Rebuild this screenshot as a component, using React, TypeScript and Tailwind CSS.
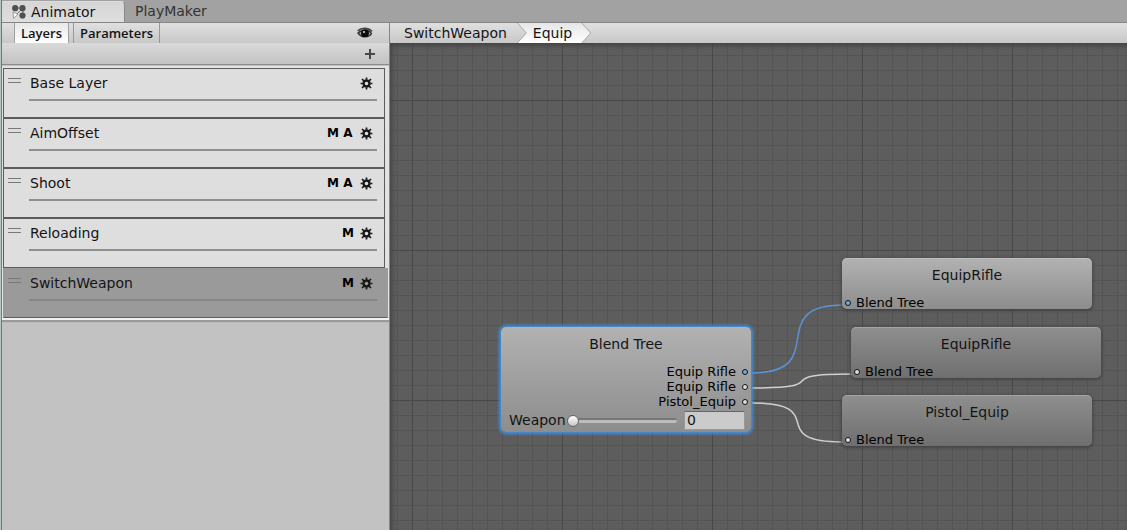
import React, { useState } from 'react';

interface Layer {
  name: string;
  mask: boolean;
  additive: boolean;
}

interface MotionNode {
  id: string;
  title: string;
  place: string;
  fill: string;
  active: boolean;
}

interface Wire {
  from: [number, number];
  to: [number, number];
  color: string;
}

const LAYERS: Layer[] = [
  { name: 'Base Layer', mask: false, additive: false },
  { name: 'AimOffset', mask: true, additive: true },
  { name: 'Shoot', mask: true, additive: true },
  { name: 'Reloading', mask: true, additive: false },
  { name: 'SwitchWeapon', mask: true, additive: false },
];

const OUTPUTS = [
  { name: 'Equip Rifle', active: true },
  { name: 'Equip Rifle', active: false },
  { name: 'Pistol_Equip', active: false },
];

const NODES: MotionNode[] = [
  { id: 'rifle-a', title: 'EquipRifle', place: 'left-[452px] top-[215px]', fill: 'from-[#b2b2b2] to-[#8d8d8d]', active: true },
  { id: 'rifle-b', title: 'EquipRifle', place: 'left-[461px] top-[284px]', fill: 'from-[#8f8f8f] to-[#6f6f6f]', active: false },
  { id: 'pistol', title: 'Pistol_Equip', place: 'left-[452px] top-[352px]', fill: 'from-[#8f8f8f] to-[#6f6f6f]', active: false },
];

const WIRES: Wire[] = [
  { from: [362, 330], to: [453, 262], color: '#5b93d4' },
  { from: [362, 345], to: [462, 331], color: '#cfcfcf' },
  { from: [362, 360], to: [453, 399], color: '#cfcfcf' },
];

const TAB_TEXT = "font-['Open_Sans',sans-serif] text-[13px] font-semibold";

// S-curve that runs close to vertical halfway between its two ports
function wirePath({ from, to }: Wire): string {
  const reach = (to[0] - from[0]) * 0.88;
  return `M${from[0]} ${from[1]} C${from[0] + reach} ${from[1]} ${to[0] - reach} ${to[1]} ${to[0]} ${to[1]}`;
}

// ─── icons ───────────────────────────────────────────────────────────────────

const AnimatorIcon: React.FC = () => (
  <svg width="16" height="16" viewBox="0 0 16 16" aria-hidden="true">
    <path d="M4 4h8v8M12 4L4 12" stroke="#777" strokeWidth="1" fill="none" />
    <circle cx="4.2" cy="4.2" r="3.1" fill="#505050" />
    <circle cx="11.5" cy="4.2" r="3.1" fill="#505050" />
    <circle cx="11.5" cy="11.5" r="3.1" fill="#505050" />
    <path d="M2 8L7 10.200L2.500 14.500Z" fill="#f8f8f8" stroke="#888" strokeWidth="0.8" />
  </svg>
);

const EyeIcon: React.FC = () => (
  <svg width="16" height="12" viewBox="0 0 16 12" aria-hidden="true">
    <path d="M1 6C3.500 3 12 2 14.500 6.500C12 11 4.500 11.200 1 6Z" fill="#aaa" stroke="#333" strokeWidth="1.400" />
    <path d="M0.800 3.800C4 0.600 11 0.200 15 4.400" fill="none" stroke="#444" strokeWidth="1.800" />
    <circle cx="8" cy="6.200" r="3.900" fill="#0a0a0a" />
    <circle cx="7" cy="5" r="0.900" fill="#fff" />
  </svg>
);

const GearIcon: React.FC = () => (
  <svg width="13" height="13" viewBox="0 0 13 13" fill="none" stroke="#181818" aria-hidden="true">
    <circle cx="6.500" cy="6.500" r="3" strokeWidth="2.400" />
    <path
      d="M6.500 0.600v2M6.500 10.400v2M0.600 6.500h2M10.400 6.500h2M2 2l2 2M9 9l2 2M2 11l2-2M9 4l2-2"
      strokeWidth="1.700"
    />
  </svg>
);

// ─── layers panel ────────────────────────────────────────────────────────────

const LayerRow: React.FC<{ layer: Layer; selected: boolean; onSelect: () => void }> = ({
  layer, selected, onSelect,
}) => (
  <li
    onClick={onSelect}
    className={`flex h-[50px] border pl-1 pr-[7px] ${
      selected
        ? 'mr-px border-[#9a9a9a] border-b-[#5c5c5c] bg-[#9a9a9a]'
        : 'mr-1 border-[#5c5c5c] bg-[#dedede]'
    }`}
  >
    <span className="mt-[9px] h-[5px] w-[13px] shrink-0 border-y border-[#787878]" />
    <div className={`ml-2 flex-1 ${selected ? 'mr-[3px]' : ''}`}>
      <div className="mt-1 flex h-5 items-center">
        <button type="button" className="flex-1 pl-px text-left">{layer.name}</button>
        <span className="flex items-center gap-[3px] text-xs font-bold text-black">
          {layer.mask && <span className="w-3 text-center">M</span>}
          {layer.additive && <span className="w-3 text-center">A</span>}
        </span>
        <button type="button" aria-label={`${layer.name} settings`} className="mr-1 ml-[6px]">
          <GearIcon />
        </button>
      </div>
      <div className={`mt-[6px] h-[2px] ${selected ? 'bg-[#868686]' : 'bg-[#909090]'}`} />
    </div>
  </li>
);

const LayersPanel: React.FC = () => {
  const [selected, setSelected] = useState('SwitchWeapon');

  return (
    <aside className="flex w-[388px] shrink-0 flex-col border-r border-[#858585] bg-[#c2c2c2]">
      <div className="flex h-[21px] items-stretch border-t border-[#858585] bg-linear-to-b from-[#e0e0e0] to-[#c8c8c8]">
        <button type="button" className={`ml-3 border-x border-[#a0a0a0] bg-linear-to-b from-[#e8e8e8] to-white px-[6px] leading-5 ${TAB_TEXT}`}>
          Layers
        </button>
        <button type="button" className={`ml-1 border-x border-[#999] px-[6px] leading-5 ${TAB_TEXT}`}>
          Parameters
        </button>
        <button type="button" aria-label="Toggle panel" className="ml-auto mr-4">
          <EyeIcon />
        </button>
      </div>
      <div className="flex h-[22px] items-center justify-end border-b border-[#8c8c8c] bg-linear-to-b from-[#dadada] to-[#c2c2c2] pr-[14px]">
        <button type="button" aria-label="Add layer">
          <svg width="10" height="10" viewBox="0 0 10 10" aria-hidden="true">
            <path d="M5 0v10M0 5h10" stroke="#484848" strokeWidth="2" />
          </svg>
        </button>
      </div>
      <ul className="mt-px border-b-2 border-[#f0f0f0] bg-[#e2e2e2] pt-[2px] pl-px shadow-[0_2px_1px_#999]">
        {LAYERS.map((layer) => (
          <LayerRow
            key={layer.name}
            layer={layer}
            selected={layer.name === selected}
            onSelect={() => setSelected(layer.name)}
          />
        ))}
      </ul>
    </aside>
  );
};

// ─── graph ───────────────────────────────────────────────────────────────────

const Port: React.FC<{ active: boolean }> = ({ active }) => (
  <span
    className={`size-[6px] shrink-0 rounded-full border border-[#111] ${active ? 'bg-[#6fa8e8]' : 'bg-[#ddd]'}`}
  />
);

const Breadcrumbs: React.FC = () => (
  <nav className="flex h-[21px] items-stretch border-t border-[#858585] bg-linear-to-b from-[#e0e0e0] to-[#c8c8c8] leading-5">
    <button type="button" className="pr-[10px] pl-[14px]">SwitchWeapon</button>
    <span className="flex bg-[#a8a8a8] [clip-path:polygon(0_0,calc(100%-9px)_0,100%_50%,calc(100%-9px)_100%,0_100%,9px_50%)]">
      <button
        type="button"
        className="mx-px bg-linear-to-b from-[#e6e6e6] to-white pr-[18px] pl-[15px] [clip-path:polygon(0_0,calc(100%-9px)_0,100%_50%,calc(100%-9px)_100%,0_100%,9px_50%)]"
      >
        Equip
      </button>
    </span>
  </nav>
);

const BlendTreeNode: React.FC = () => {
  const [weapon, setWeapon] = useState('0');

  return (
    <section className="absolute top-[284px] left-[111px] h-[105px] w-[250px] rounded-[5px] bg-linear-to-b from-[#b2b2b2] to-[#8d8d8d] pt-[7px] shadow-[0_0_3px_2px_#3f8fdc]">
      <h2 className="text-center leading-5">Blend Tree</h2>
      <ul className="mt-[10px]">
        {OUTPUTS.map((output, i) => (
          <li key={i} className="flex h-[15px] items-center justify-end gap-[6px] pr-[3px] text-[13px] leading-[15px] text-black">
            {output.name}
            <Port active={output.active} />
          </li>
        ))}
      </ul>
      <div className="mt-px flex h-5 items-center pr-[6px] pl-2">
        <label htmlFor="weapon">Weapon</label>
        <input
          id="weapon"
          type="range"
          min="0"
          max="1"
          step="0.01"
          value={Number(weapon) || 0}
          onChange={(e) => setWeapon(e.target.value)}
          className="mr-[7px] ml-px h-3 min-w-0 flex-1 appearance-none bg-transparent [&::-webkit-slider-runnable-track]:h-[5px] [&::-webkit-slider-runnable-track]:rounded-sm [&::-webkit-slider-runnable-track]:border-t-2 [&::-webkit-slider-runnable-track]:border-[#777] [&::-webkit-slider-runnable-track]:bg-[#bcbcbc] [&::-webkit-slider-thumb]:-mt-[5px] [&::-webkit-slider-thumb]:size-3 [&::-webkit-slider-thumb]:appearance-none [&::-webkit-slider-thumb]:rounded-full [&::-webkit-slider-thumb]:border [&::-webkit-slider-thumb]:border-[#666] [&::-webkit-slider-thumb]:bg-linear-to-b [&::-webkit-slider-thumb]:from-white [&::-webkit-slider-thumb]:to-[#c4c4c4]"
        />
        <input
          type="text"
          aria-label="Weapon value"
          value={weapon}
          onChange={(e) => setWeapon(e.target.value)}
          className="h-[19px] w-[61px] border border-[#999] border-t-[#666] bg-[#cbcbcb] px-[2px]"
        />
      </div>
    </section>
  );
};

const Graph: React.FC = () => (
  <div className="relative flex-1 overflow-hidden bg-[#5d5d5d] bg-[linear-gradient(to_right,#484848_1px,transparent_1px),linear-gradient(to_bottom,#484848_1px,transparent_1px),linear-gradient(to_right,#545454_1px,transparent_1px),linear-gradient(to_bottom,#545454_1px,transparent_1px)] bg-size-[150px_150px,150px_150px,15px_15px,15px_15px] bg-position-[22px_57px,22px_57px,7px_12px,7px_12px] shadow-[inset_2px_3px_4px_#444]">
    <svg className="absolute inset-0 size-full" fill="none" aria-hidden="true">
      {WIRES.map((wire, i) => (
        <path key={i} d={wirePath(wire)} stroke={wire.color} strokeWidth="1.500" />
      ))}
    </svg>
    <BlendTreeNode />
    {NODES.map((node) => (
      <section
        key={node.id}
        className={`absolute h-[51px] w-[250px] rounded-[5px] bg-linear-to-b pt-[7px] shadow-[0_1px_3px_1px_#444,inset_0_1px_0_#ffffff33] ${node.place} ${node.fill}`}
      >
        <h2 className="text-center leading-5">{node.title}</h2>
        <p className="mt-[10px] flex h-[15px] items-center gap-[5px] pl-[3px] text-[13px] leading-[15px] text-black">
          <Port active={node.active} />
          Blend Tree
        </p>
      </section>
    ))}
  </div>
);

export default function App() {
  return (
    <div className="flex min-h-screen flex-col border-l border-[#b9c4be] bg-[#a2a2a2] font-['DejaVu_Sans',sans-serif] text-sm text-[#141414]">
      <header className="flex h-[22px] items-stretch border-l border-[#3f8f6b] leading-[22px]">
        <button type="button" className="mt-px flex w-[123px] items-center gap-1 rounded-tr-sm border-t border-r border-[#888] border-t-[#ddd] bg-linear-to-b from-[#d6d6d6] to-[#dedede] pl-[9px]">
          <AnimatorIcon />
          Animator
        </button>
        <button type="button" className="pl-[10px] text-[#333]">PlayMaker</button>
      </header>
      <main className="flex flex-1 border-l border-[#3f8f6b]">
        <LayersPanel />
        <div className="flex min-w-0 flex-1 flex-col">
          <Breadcrumbs />
          <Graph />
        </div>
      </main>
    </div>
  );
}
